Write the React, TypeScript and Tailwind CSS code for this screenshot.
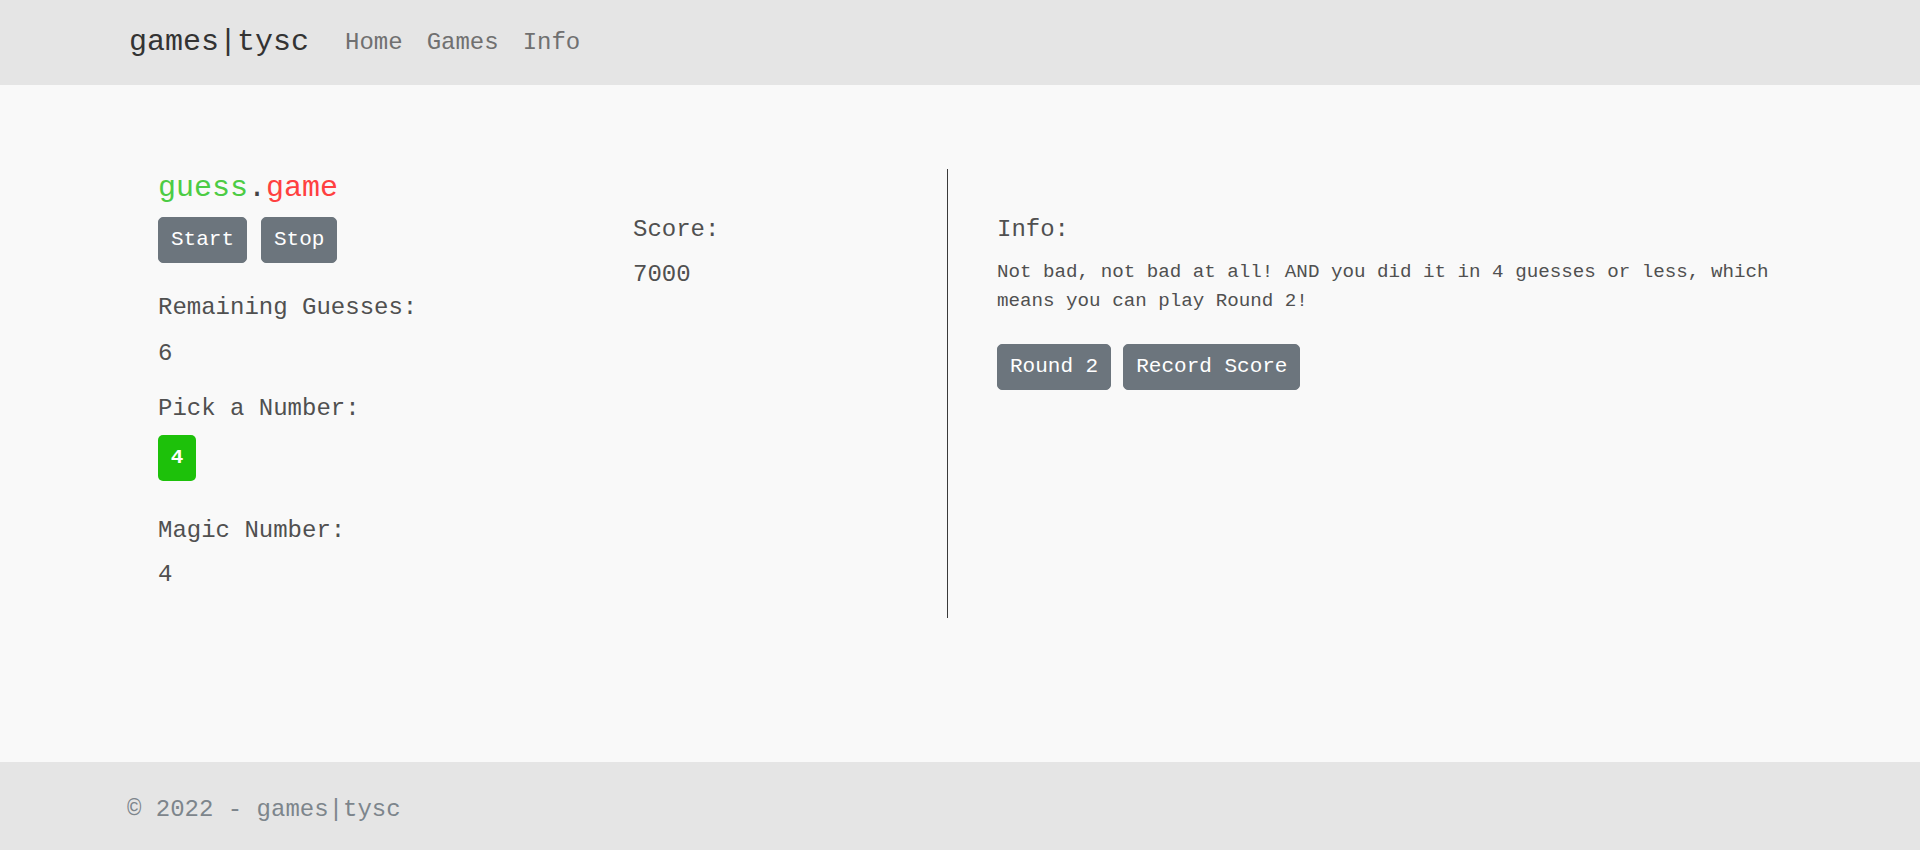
import React from "react";

const font = { fontFamily: "'Liberation Mono', 'Courier New', monospace" };

function Btn({ children, className = "" }: { children: React.ReactNode; className?: string }) {
  return (
    <button
      className={`h-[46px] px-[12px] rounded-[5px] border border-[#6c757d] bg-[#6c757d] text-white text-[21px] leading-[31.5px] ${className}`}
      style={font}
    >
      {children}
    </button>
  );
}

export default function App() {
  return (
    <div className="h-[850px] flex flex-col bg-[#f9f9f9] text-[#505050]" style={font}>
      <header className="h-[85px] bg-[#e5e5e5] flex items-center pl-[129px]">
        <span className="text-[30px] leading-[45px] text-[#333] mr-[24px]">games|tysc</span>
        <nav className="flex">
          <span className="px-[12px] text-[24px] leading-[36px] text-[#707070]">Home</span>
          <span className="px-[12px] text-[24px] leading-[36px] text-[#707070]">Games</span>
          <span className="px-[12px] text-[24px] leading-[36px] text-[#707070]">Info</span>
        </nav>
      </header>

      <main className="flex-1 pt-[84px]">
        <div className="flex h-[449px] pl-[158px]">
          <div className="w-[475px] flex flex-col items-start text-[24px] leading-[36px]">
            <h5 className="mt-[1px] text-[30px] leading-[36px]">
              <span className="text-[#4ccc44]">guess</span>
              <span className="text-[#444]">.</span>
              <span className="text-[#ff4040]">game</span>
            </h5>
            <div className="mt-[11px] flex gap-[14px]">
              <Btn>Start</Btn>
              <Btn>Stop</Btn>
            </div>
            <div className="mt-[27px]">Remaining Guesses:</div>
            <div className="mt-[10px]">6</div>
            <div className="mt-[19px]">Pick a Number:</div>
            <button
              className="mt-[8px] h-[46px] w-[38px] rounded-[5px] bg-[#1dc10a] text-white font-bold text-[21px] leading-[31.5px]"
              style={font}
            >
              4
            </button>
            <div className="mt-[32px]">Magic Number:</div>
            <div className="mt-[8px]">4</div>
          </div>

          <div className="w-[314px] flex flex-col text-[24px] leading-[36px] pt-[43px]">
            <div>Score:</div>
            <div className="mt-[9px]">7000</div>
          </div>

          <div className="w-[853px] border-l border-[#3a3a3a] pl-[49px] pt-[43px] flex flex-col items-start">
            <div className="text-[24px] leading-[36px]">Info:</div>
            <p className="mt-[10px] text-[19.2px] leading-[28.8px]">
              Not bad, not bad at all! AND you did it in 4 guesses or less, which means you can play Round 2!
            </p>
            <div className="mt-[28px] flex gap-[12px]">
              <Btn>Round 2</Btn>
              <Btn>Record Score</Btn>
            </div>
          </div>
        </div>
      </main>

      <footer className="h-[88px] bg-[#e5e5e5] pl-[127px] pt-[30px]">
        <span className="text-[24px] leading-[36px] text-[#7d858c]">© 2022 - games|tysc</span>
      </footer>
    </div>
  );
}
